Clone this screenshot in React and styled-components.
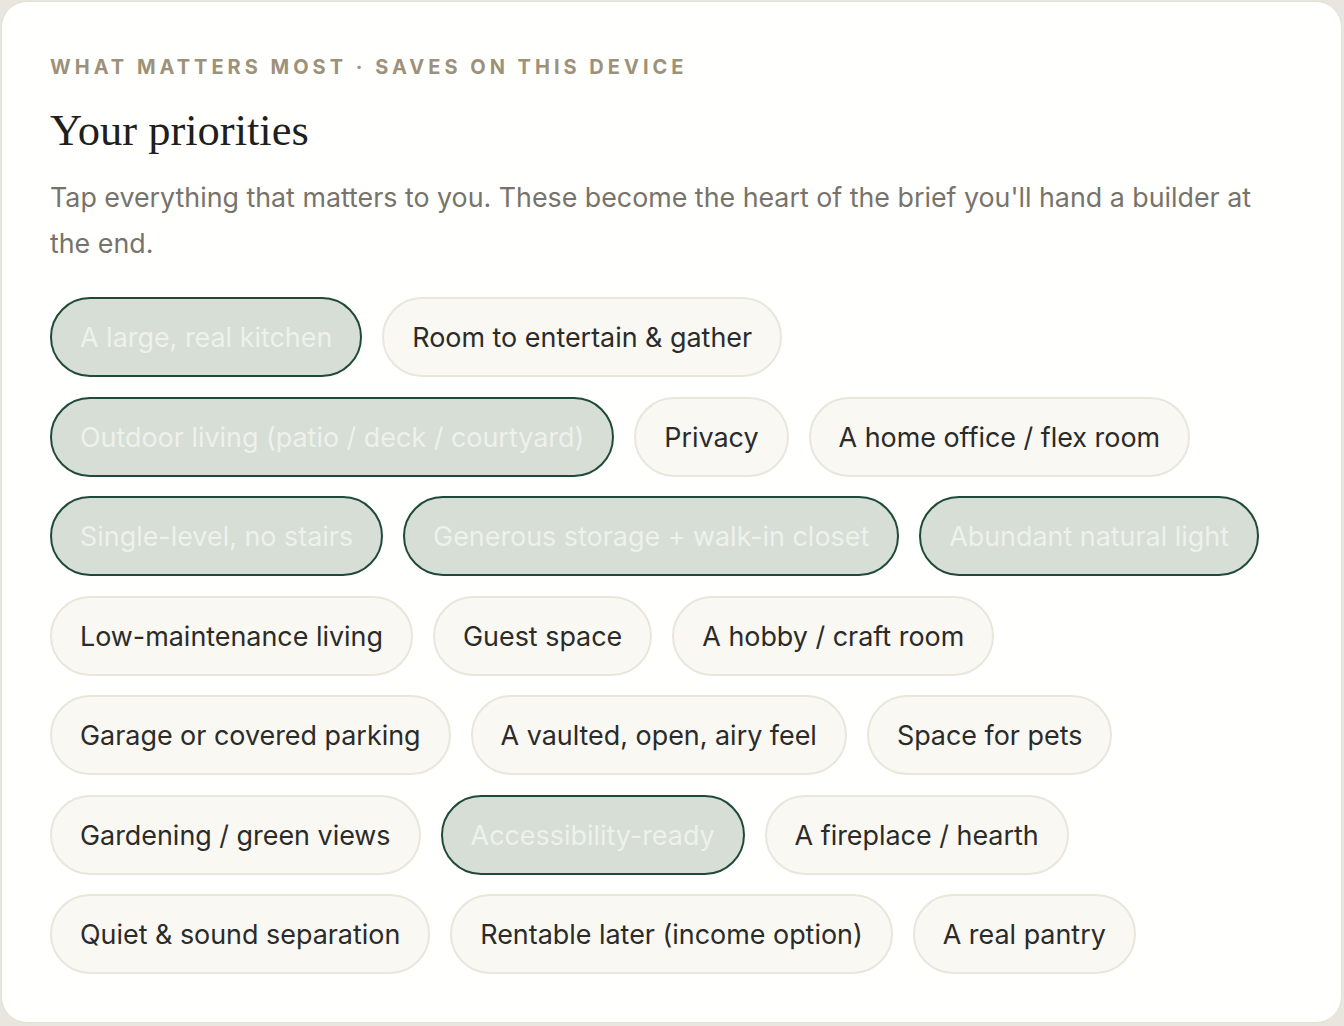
import React from 'react';
import styled, { createGlobalStyle } from 'styled-components';

const GlobalStyle = createGlobalStyle`
  html, body {
    margin: 0;
    padding: 0;
    background: #e8e6de;
  }
  body {
    font-family: Inter, "Noto Sans", "Liberation Sans", sans-serif;
    -webkit-font-smoothing: antialiased;
  }
`;

const Page = styled.div`
  padding: 1px 2px 2px 1px;
  min-height: 1026px;
  box-sizing: border-box;
`;

const Card = styled.section`
  background: #fffffe;
  border: 1px solid #e2dfd4;
  border-radius: 26px;
  padding: 52px 48px 47px 48px;
  min-height: 1022px;
  box-sizing: border-box;
`;

const Eyebrow = styled.div`
  font-size: 20px;
  font-weight: 700;
  letter-spacing: 0.2em;
  color: #9d917a;
  text-transform: uppercase;
  line-height: 26px;
`;

const Title = styled.h1`
  margin: 22px 0 0;
  font-family: "Liberation Serif", "DejaVu Serif", serif;
  font-weight: 400;
  font-size: 44.5px;
  line-height: 56px;
  color: #1f1f1d;
`;

const Lede = styled.p`
  margin: 16px 0 0;
  font-size: 26.8px;
  line-height: 46px;
  color: #77736b;
`;

const ChipList = styled.div`
  display: flex;
  flex-wrap: wrap;
  gap: 19.5px 20px;
  margin-top: 31px;
`;

const Chip = styled.button`
  display: inline-flex;
  align-items: center;
  height: 80px;
  box-sizing: border-box;
  padding: 0 28px;
  border-radius: 999px;
  font-family: inherit;
  font-size: 26.9px;
  font-weight: 400;
  cursor: pointer;
  white-space: nowrap;
  border: 2px solid ${p => (p.$on ? '#1f4a3a' : '#e9e6db')};
  background: ${p => (p.$on ? '#d6ded6' : '#f9f8f3')};
  color: ${p => (p.$on ? '#eef1ec' : '#2b2b29')};
`;

const priorities = [
  { label: 'A large, real kitchen', on: true },
  { label: 'Room to entertain & gather' },
  { label: 'Outdoor living (patio / deck / courtyard)', on: true },
  { label: 'Privacy' },
  { label: 'A home office / flex room' },
  { label: 'Single-level, no stairs', on: true },
  { label: 'Generous storage + walk-in closet', on: true },
  { label: 'Abundant natural light', on: true },
  { label: 'Low-maintenance living' },
  { label: 'Guest space' },
  { label: 'A hobby / craft room' },
  { label: 'Garage or covered parking' },
  { label: 'A vaulted, open, airy feel' },
  { label: 'Space for pets' },
  { label: 'Gardening / green views' },
  { label: 'Accessibility-ready', on: true },
  { label: 'A fireplace / hearth' },
  { label: 'Quiet & sound separation' },
  { label: 'Rentable later (income option)' },
  { label: 'A real pantry' },
];

const App = () => {
  return (
    <Page>
      <GlobalStyle />
      <Card>
        <Eyebrow>What matters most · saves on this device</Eyebrow>
        <Title>Your priorities</Title>
        <Lede>
          Tap everything that matters to you. These become the heart of the brief you'll hand a builder at the end.
        </Lede>
        <ChipList>
          {priorities.map(p => (
            <Chip key={p.label} $on={p.on}>{p.label}</Chip>
          ))}
        </ChipList>
      </Card>
    </Page>
  );
};

export default App;
